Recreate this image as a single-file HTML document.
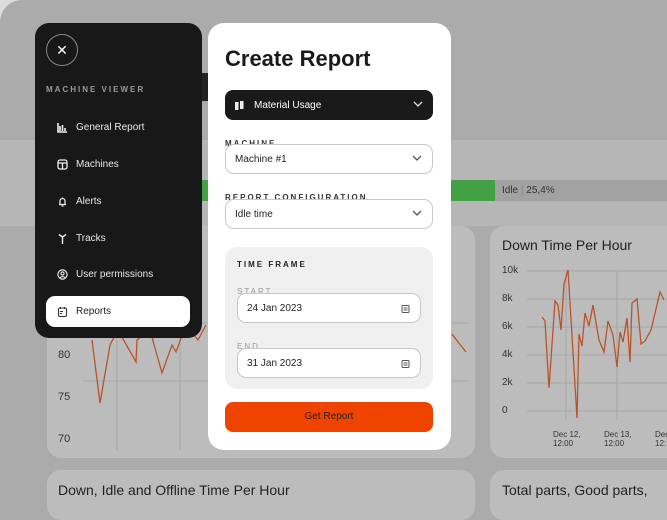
<!DOCTYPE html>
<html><head><style>
*{box-sizing:border-box;margin:0;padding:0}
body{width:667px;height:500px;overflow:hidden;background:#dcdcdc;font-family:"Liberation Sans",sans-serif;position:relative}
.a{position:absolute}
.page{left:0;top:0;width:700px;height:520px;background:#ababab;border-radius:22px 0 0 0}
.card{background:#bcbcbc;border-radius:14px}
.side{left:35px;top:23px;width:167px;height:315px;background:#181818;border-radius:14px;color:#eee}
.mi{position:absolute;left:22px;font-size:10px;color:#e8e8e8;display:flex;align-items:center}
.mi svg{margin-right:8px}
.modal{left:208px;top:23px;width:243px;height:427px;background:#fff;border-radius:16px}
.lab{position:absolute;font-size:8px;letter-spacing:2px;color:#333;font-weight:bold}
.inp{position:absolute;background:#fff;border:1px solid #c8c8c8;border-radius:9px;font-size:10px;color:#222;padding-left:9px;display:flex;align-items:center}
.chev{position:absolute;right:10px;top:50%;margin-top:-4px}
.yl{position:absolute;font-size:11px;color:#333}
</style></head><body>
<div class="a page"></div>
<div class="a" style="left:0;top:140px;width:667px;height:86px;background:#b6b6b6"></div>
<div class="a" style="left:200px;top:180px;width:295px;height:21px;background:#44a044"></div>
<div class="a" style="left:495px;top:180px;width:172px;height:21px;background:#a2a2a2"></div>
<div class="a" style="left:502px;top:185px;font-size:10px;color:#333">Idle <span style="color:#888">|</span> 25,4%</div>
<div class="a" style="left:202px;top:73px;width:8px;height:28px;background:#222"></div>
<div class="a card" style="left:47px;top:226px;width:428px;height:232px"></div>
<div class="a card" style="left:490px;top:226px;width:200px;height:232px"></div>
<div class="a card" style="left:47px;top:470px;width:428px;height:50px"></div>
<div class="a card" style="left:490px;top:470px;width:200px;height:50px"></div>
<div class="a" style="left:58px;top:482px;font-size:14px;color:#222">Down, Idle and Offline Time Per Hour</div>
<div class="a" style="left:502px;top:482px;font-size:14px;color:#222">Total parts, Good parts,</div>
<div class="a" style="left:502px;top:237px;font-size:14px;color:#222">Down Time Per Hour</div>
<div class="yl" style="left:58px;top:349px">80</div><div class="yl" style="left:58px;top:391px">75</div><div class="yl" style="left:58px;top:433px">70</div>
<div class="yl" style="left:502px;top:265px;font-size:10px">10k</div><div class="yl" style="left:502px;top:293px;font-size:10px">8k</div><div class="yl" style="left:502px;top:321px;font-size:10px">6k</div><div class="yl" style="left:502px;top:349px;font-size:10px">4k</div><div class="yl" style="left:502px;top:377px;font-size:10px">2k</div><div class="yl" style="left:502px;top:405px;font-size:10px">0</div>
<div class="yl" style="left:553px;top:430px;font-size:8px;line-height:9px">Dec 12,<br>12:00</div>
<div class="yl" style="left:604px;top:430px;font-size:8px;line-height:9px">Dec 13,<br>12:00</div>
<div class="yl" style="left:655px;top:430px;font-size:8px;line-height:9px">Dec<br>12:</div>
<svg class="a" style="left:0;top:0" width="667" height="500">
<g stroke="#a6a6a6" stroke-width="1">
<line x1="83" y1="323" x2="468" y2="323"/><line x1="83" y1="381" x2="468" y2="381"/>
<line x1="117" y1="260" x2="117" y2="450"/><line x1="180" y1="260" x2="180" y2="450"/>
<line x1="527" y1="271" x2="667" y2="271"/><line x1="527" y1="299" x2="667" y2="299"/><line x1="527" y1="327" x2="667" y2="327"/><line x1="527" y1="355" x2="667" y2="355"/><line x1="527" y1="383" x2="667" y2="383"/><line x1="527" y1="411" x2="667" y2="411"/>
<line x1="566" y1="271" x2="566" y2="420"/><line x1="617" y1="271" x2="617" y2="420"/>
</g>
<polyline fill="none" stroke="#b8542a" stroke-width="1.3" points="92,340 100,403 110,345 118,330 136,362 137,340 150,330 162,373 172,345 176,352 184,330 190,330 198,340 206,325"/>
<polyline fill="none" stroke="#b8542a" stroke-width="1.3" points="452,334 458,342 466,352"/>
<polyline fill="none" stroke="#b8542a" stroke-width="1.3" points="542,317 545,321 549,388 555,301 558,305 561,330 564,284 568,270 577,418 579,334 582,346 585,313 589,326 593,305 599,340 604,352 608,321 613,335 617,367 620,332 623,342 627,318 630,362 632,303 637,299 641,344 645,341 651,330 660,292 664,300"/>
</svg>
<div class="a side">
<div class="a" style="left:11px;top:11px;width:32px;height:32px;border:1px solid #888;border-radius:50%;color:#fff;font-size:14px;text-align:center;line-height:30px">✕</div>
<div class="a" style="left:11px;top:62px;font-size:8px;letter-spacing:2px;color:#9a9a9a;font-weight:bold">MACHINE VIEWER</div>
<div class="mi" style="top:99px"><svg width="11" height="11"><path d="M1 1v9h9M3 9V4M5.5 9V3M8 9V6" stroke="#eee" stroke-width="1.6" fill="none"/></svg>General Report</div>
<div class="mi" style="top:136px"><svg width="11" height="11"><rect x="1" y="1" width="9" height="9" rx="2" stroke="#eee" fill="none" stroke-width="1.3"/><path d="M1 4h9M5.5 4v6" stroke="#eee" stroke-width="1.3"/></svg>Machines</div>
<div class="mi" style="top:173px"><svg width="11" height="11"><path d="M2 8.5h7M3 8.5V5a2.5 2.5 0 015 0v3.5M5.5 1.5v1M4.5 10h2" stroke="#eee" stroke-width="1.2" fill="none"/></svg>Alerts</div>
<div class="mi" style="top:210px"><svg width="11" height="11"><path d="M5.5 4v7M5.5 4L2 1.5M5.5 4L9 1.5" stroke="#eee" stroke-width="1.4" fill="none"/></svg>Tracks</div>
<div class="mi" style="top:246px"><svg width="11" height="11"><circle cx="5.5" cy="5.5" r="4.6" stroke="#eee" fill="none" stroke-width="1.2"/><circle cx="5.5" cy="4.5" r="1.6" stroke="#eee" fill="none" stroke-width="1.1"/><path d="M3 8.6a3 2 0 015 0" stroke="#eee" fill="none" stroke-width="1.1"/></svg>User permissions</div>
<div class="a" style="left:11px;top:273px;width:144px;height:31px;background:#fff;border-radius:9px"></div>
<div class="mi" style="top:283px;color:#222"><svg width="11" height="11"><rect x="1.5" y="2" width="8" height="8.5" rx="1.5" stroke="#333" fill="none" stroke-width="1.1"/><path d="M3.5 1v2M7.5 1v2M3 5.5h3M3 7.5h2" stroke="#333" stroke-width="1"/></svg>Reports</div>
</div>
<div class="a modal">
<div class="a" style="left:17px;top:23px;font-size:22px;font-weight:bold;color:#1a1a1a">Create Report</div>
<div class="a" style="left:17px;top:67px;width:208px;height:30px;background:#1a1a1a;border-radius:8px;color:#fff;font-size:10px;display:flex;align-items:center;padding-left:10px">
<svg width="9" height="9" style="margin-right:10px"><rect x="0" y="1" width="3.5" height="8" fill="#eee"/><rect x="5" y="0" width="3.5" height="8" fill="#eee"/></svg>Material Usage
<svg class="chev" width="10" height="7"><path d="M1 1l4 4 4-4" stroke="#ddd" fill="none" stroke-width="1.3"/></svg></div>
<div class="lab" style="left:17px;top:116px">MACHINE</div>
<div class="inp" style="left:17px;top:121px;width:208px;height:30px">Machine #1<svg class="chev" width="10" height="7"><path d="M1 1l4 4 4-4" stroke="#555" fill="none" stroke-width="1.3"/></svg></div>
<div class="lab" style="left:17px;top:170px">REPORT CONFIGURATION</div>
<div class="inp" style="left:17px;top:176px;width:208px;height:30px">Idle time<svg class="chev" width="10" height="7"><path d="M1 1l4 4 4-4" stroke="#555" fill="none" stroke-width="1.3"/></svg></div>
<div class="a" style="left:17px;top:224px;width:208px;height:142px;background:#f0f0f0;border-radius:12px"></div>
<div class="lab" style="left:29px;top:237px;color:#222">TIME FRAME</div>
<div class="lab" style="left:29px;top:264px;color:#999;font-weight:normal">START</div>
<div class="inp" style="left:29px;top:270px;width:184px;height:30px">24 Jan 2023<svg class="chev" width="9" height="9"><rect x="1" y="1.5" width="7" height="7" rx="1" stroke="#555" fill="none"/><path d="M2.5 4h4M2.5 6h4" stroke="#555"/></svg></div>
<div class="lab" style="left:29px;top:319px;color:#999;font-weight:normal">END</div>
<div class="inp" style="left:29px;top:325px;width:184px;height:30px">31 Jan 2023<svg class="chev" width="9" height="9"><rect x="1" y="1.5" width="7" height="7" rx="1" stroke="#555" fill="none"/><path d="M2.5 4h4M2.5 6h4" stroke="#555"/></svg></div>
<div class="a" style="left:17px;top:379px;width:208px;height:30px;background:#ee4400;border-radius:8px;font-size:10px;color:#222;text-align:center;line-height:30px">Get Report</div>
</div>
</body></html>
